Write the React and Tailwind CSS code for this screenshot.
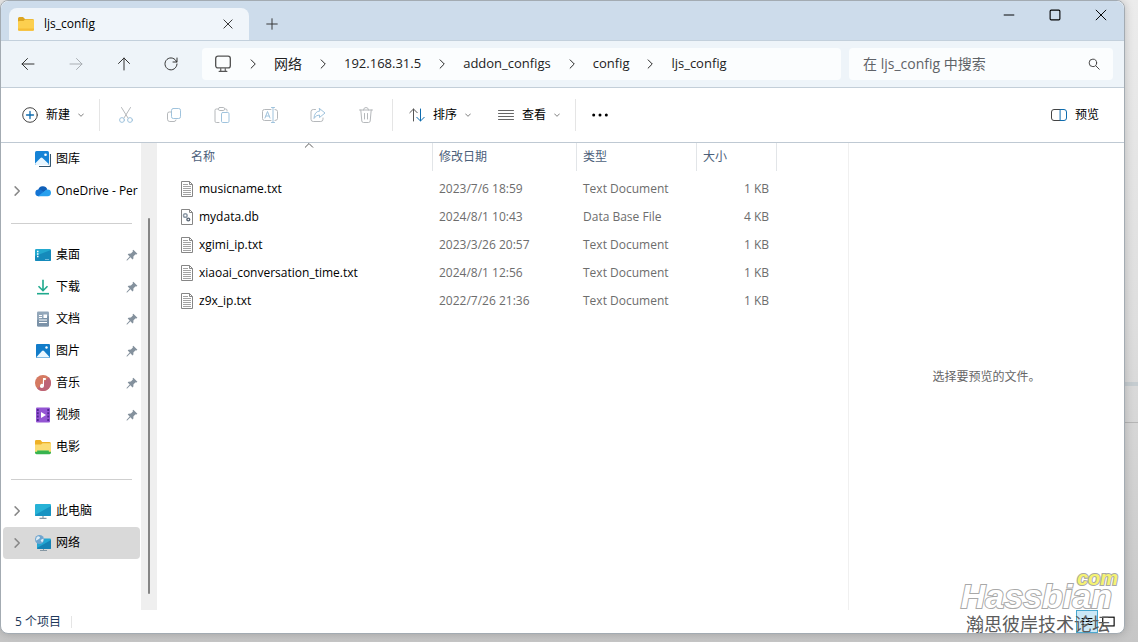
import { useState } from "react";
import clsx from "clsx";

const crumbs = ["网络", "192.168.31.5", "addon_configs", "config", "ljs_config"];

const files = [
  { name: "musicname.txt", date: "2023/7/6 18:59", type: "Text Document", size: "1 KB" },
  { name: "mydata.db", date: "2024/8/1 10:43", type: "Data Base File", size: "4 KB" },
  { name: "xgimi_ip.txt", date: "2023/3/26 20:57", type: "Text Document", size: "1 KB" },
  { name: "xiaoai_conversation_time.txt", date: "2024/8/1 12:56", type: "Text Document", size: "1 KB" },
  { name: "z9x_ip.txt", date: "2022/7/26 21:36", type: "Text Document", size: "1 KB" },
];

const places = [
  { label: "图库", icon: GalleryIcon },
  { label: "OneDrive - Per", icon: CloudIcon, tree: true },
  null,
  { label: "桌面", icon: DesktopIcon, pinned: true },
  { label: "下载", icon: DownloadIcon, pinned: true },
  { label: "文档", icon: DocsIcon, pinned: true },
  { label: "图片", icon: PicturesIcon, pinned: true },
  { label: "音乐", icon: MusicIcon, pinned: true },
  { label: "视频", icon: VideoIcon, pinned: true },
  { label: "电影", icon: MovieFolderIcon },
  null,
  { label: "此电脑", icon: ComputerIcon, tree: true },
  { label: "网络", icon: NetworkIcon, tree: true },
];

const editTools = [
  { label: "剪切", icon: CutIcon },
  { label: "复制", icon: CopyIcon },
  { label: "粘贴", icon: PasteIcon },
  { label: "重命名", icon: RenameIcon },
  { label: "共享", icon: ShareIcon },
  { label: "删除", icon: TrashIcon },
];

/* ---------- icons ---------- */

function Line({ d, className = "w-4 h-4", weight = 1, children }) {
  return (
    <svg
      viewBox="0 0 16 16"
      className={clsx("shrink-0", className)}
      fill="none"
      stroke="currentColor"
      strokeWidth={weight}
      strokeLinecap="round"
      strokeLinejoin="round"
      aria-hidden="true"
    >
      {d && <path d={d} />}
      {children}
    </svg>
  );
}

function Color({ children }) {
  return (
    <svg viewBox="0 0 16 16" className="w-4 h-4 shrink-0" aria-hidden="true">
      {children}
    </svg>
  );
}

function FolderIcon() {
  return (
    <Color>
      <path d="M0 2.500Q0 1 1.500 1H5l2 2h7.500Q16 3 16 4.500V8H0z" fill="#dca522" />
      <path d="M0 6q0-1 1-1h4.500L7 3.500h7.800q1.200 0 1.200 1.200V13.500q0 1.300-1.300 1.300H1.300Q0 14.800 0 13.500z" fill="#fccf4f" />
      <path d="M0 12.500v1q0 1.300 1.300 1.300h13.400q1.300 0 1.300-1.300v-1z" fill="#f5bd37" />
    </Color>
  );
}

function GalleryIcon() {
  return (
    <Color>
      <path d="M4 15.500h10.500q1 0 1-1V3" fill="none" stroke="#35566f" strokeWidth="1.200" />
      <rect width="14" height="14" rx="1.500" fill="#1583d6" />
      <path d="M0 12.500 5.500 7q1-1 2 0l6.300 6q-.5 1-1.500 1H1.500Q.3 14 0 12.500z" fill="#e8f6ff" />
      <circle cx="10.500" cy="3.800" r="1.300" fill="#fff" />
    </Color>
  );
}

function CloudIcon() {
  return (
    <Color>
      <path d="M3.200 7A4.800 4.800 0 0 1 12.300 6.300L9 9.500z" fill="#0f5fb8" />
      <path d="M3.500 13.200A3.300 3.300 0 0 1 3.800 6.600C5 6.600 6 7 6.800 7.600L13 12z" fill="#1474d4" />
      <path d="M3 13.200 10.800 7a3.900 3.900 0 0 1 1.800-.6 3.400 3.400 0 0 1 0 6.800z" fill="#28a0ee" />
    </Color>
  );
}

function DesktopIcon() {
  return (
    <Color>
      <rect y="2" width="16" height="12" rx="1.200" fill="#23a9cf" />
      <path d="M0 9 16 3v10q0 1-1.200 1H1.200Q0 14 0 12.800z" fill="#158abb" />
      <path d="M2 4.500h1.500M2 7h1.500M2 9.500h1.500" stroke="#fff" strokeWidth="1.300" />
      <path d="M10.500 12.500h1M12.500 12.500h1" stroke="#cdefff" strokeWidth="1" />
    </Color>
  );
}

function DownloadIcon() {
  return (
    <Color>
      <path d="M8 .8v10.700M3.500 7.300 8 11.700l4.500-4.400" fill="none" stroke="#1fa98d" strokeWidth="1.600" />
      <path d="M2 14.700h12" stroke="#1fa98d" strokeWidth="1.600" />
    </Color>
  );
}

function DocsIcon() {
  return (
    <Color>
      <rect x="2" y=".5" width="12" height="15" rx="1.200" fill="#93a7ba" />
      <path d="M2 9 14 5v9.300q0 1.200-1.200 1.200H3.200Q2 15.500 2 14.300z" fill="#7b92a8" />
      <path d="M4 4.500h3M4 6.500h3M4 9h8M4 11.500h8" stroke="#fff" strokeWidth="1.100" />
      <rect x="8.500" y="3.500" width="3.500" height="3.500" fill="#fff" />
    </Color>
  );
}

function PicturesIcon() {
  return (
    <Color>
      <rect x="1" y="1" width="14" height="14" rx="1" fill="#127cc9" />
      <path d="M1.500 14 7 8q1-1 2 0l5.500 6q-.2.500-1 .5H2.500q-.8 0-1-.5z" fill="#eaf7ff" />
      <circle cx="11.500" cy="4.500" r="1.200" fill="#fff" />
    </Color>
  );
}

function MusicIcon() {
  return (
    <Color>
      <circle cx="8" cy="8" r="8" fill="#d57a62" />
      <path d="M13.700 2.300A8 8 0 0 1 2.300 13.700z" fill="#bd6478" />
      <path d="M8 3h2.800v2H9v5.800a2 2 0 1 1-1.200-1.700z" fill="#fff" />
    </Color>
  );
}

function VideoIcon() {
  return (
    <Color>
      <rect x="1" y=".5" width="14" height="15" rx="1" fill="#9455d3" />
      <path d="M2.800 2v12M13.200 2v12" stroke="#4f2590" strokeWidth="1.800" strokeDasharray="2 1.300" />
      <path d="M6 5v6l5-3z" fill="#fff" />
    </Color>
  );
}

function MovieFolderIcon() {
  return (
    <Color>
      <path d="M0 2.300Q0 1 1.300 1h4.200l1.700 2H14.500Q16 3 16 4.500V8H0z" fill="#eeb127" />
      <path d="M0 5.500h6l1.500-1.300h8.500V13H0z" fill="#fbdc74" />
      <path d="M2 11.500h12v2H2z" fill="#5fd36a" />
      <path d="M0 12.800h2.500v-1h11v1H16v.7q0 1.800-1.500 1.800h-13Q0 15.300 0 13.500z" fill="#38b44f" />
    </Color>
  );
}

function ComputerIcon() {
  return (
    <Color>
      <rect y="1" width="16" height="12" rx="1" fill="#27b2d6" />
      <path d="M0 12 16 3v9q0 1-1 1H1q-1 0-1-1z" fill="#1793c2" />
      <path d="M8 13v2M4.500 15.300h7" stroke="#8697a3" strokeWidth="1.200" />
    </Color>
  );
}

function NetworkIcon() {
  return (
    <Color>
      <rect x="2" y="3.500" width="14" height="10.500" rx="1" fill="#22a6d2" />
      <path d="M2 13 16 5v8q0 1-1 1H3q-1 0-1-1z" fill="#1582b5" />
      <path d="M8.500 14v1.500M5 15.500h7" stroke="#8697a3" />
      <circle cx="4.500" cy="4.500" r="4.500" fill="#6fa5cf" />
      <path d="M1.500 2.500q1.500-1.800 3-.8T3 4.500 1 4.500zM5.500 5 8.500 3.500q.3 2.500-1.500 4z" fill="#dcebf5" />
    </Color>
  );
}

function PinIcon() {
  return (
    <svg viewBox="0 0 12 12" className="w-3 h-3 shrink-0" aria-hidden="true">
      <path d="M7.300.800 11.400 4.700 10.500 5.400 9.700 5.200 7.500 7.300 7.300 9.700 6.500 10.400 4.400 8.300 1.200 11.400.500 11.500.700 10.700 3.700 7.500 1.700 5.500 2.500 4.700 4.900 4.600 6.900 2.500 6.600 1.600z" fill="#84919d" />
    </svg>
  );
}

function CutIcon() {
  return (
    <Line>
      <path d="M3.500.5 10 11M12.500.5 6 11" stroke="#b5b8bb" />
      <g stroke="#9fc3dd">
        <circle cx="4" cy="13" r="2.400" />
        <circle cx="12" cy="13" r="2.400" />
      </g>
    </Line>
  );
}

function CopyIcon() {
  return (
    <Line>
      <rect x="5.500" y="1.500" width="9" height="10" rx="1.800" stroke="#9fc3dd" />
      <path d="M5 5H3.300Q1.500 5 1.500 6.800v5.400Q1.500 14.500 3.800 14.500H8q1.800 0 2-1.500" stroke="#b5b8bb" />
    </Line>
  );
}

function PasteIcon() {
  return (
    <Line>
      <path d="M4.500 2H2.300Q1 2 1 3.300v10.900q0 1.300 1.300 1.300H5M10.500 2h1.200Q13 2 13 3.300V4" stroke="#b5b8bb" />
      <rect x="4.500" y=".5" width="6" height="3" rx="1.200" stroke="#b5b8bb" />
      <rect x="7.500" y="5.500" width="7.500" height="10" rx="1.200" stroke="#9fc3dd" />
    </Line>
  );
}

function RenameIcon() {
  return (
    <Line>
      <path d="M9 2.500H2.500Q.5 2.500.5 4.500v7q0 2 2 2H9M13 2.500q2.500 0 2.500 2v7q0 2-2.500 2" stroke="#b5b8bb" />
      <path d="M9.500.5h3M11 .5v15M9.500 15.500h3M3 11l2.500-6.500L8 11M4 9h3" stroke="#9fc3dd" />
    </Line>
  );
}

function ShareIcon() {
  return (
    <Line>
      <path d="M5.500 2.500H3.300Q1 2.500 1 4.800v7.400q0 2.300 2.300 2.300h7.400q2.300 0 2.300-2.300V11" stroke="#b5b8bb" />
      <path d="M9.500 1.500 15 6l-5.500 4.500V8Q6 7.800 4 11.500 4.300 4.500 9.500 4z" stroke="#9fc3dd" />
    </Line>
  );
}

function TrashIcon() {
  return (
    <Line className="w-4 h-4 text-[#b5b8bb]" d="M1.500 3h13M5.500 3q0-2.500 2.500-2.500T10.500 3M2.800 3l1 11q.2 1.500 1.700 1.500h5q1.500 0 1.700-1.500l1-11M6.500 6.500v5.500M9.500 6.500v5.500" />
  );
}

function FileIcon({ db }) {
  return (
    <svg viewBox="0 0 14 16" className="w-[14px] h-4 shrink-0" fill="none" aria-hidden="true">
      <path d="M1.500.5h8L12.500 3.500v12h-11z" fill="#fff" stroke="#868686" />
      <path d="M9.500.5v3h3" stroke="#868686" />
      {db ? (
        <>
          <circle cx="5.300" cy="6.500" r="1.800" stroke="#8d99a5" strokeWidth="1.500" />
          <circle cx="8.300" cy="10.500" r="1.400" stroke="#596675" strokeWidth="1.400" />
        </>
      ) : (
        <path d="M3 3.500h5M3 5.500h8M3 7.500h8M3 9.500h8M3 11.500h8M3 13.500h8" stroke="#a3a3a3" />
      )}
    </svg>
  );
}

function Chevron({ className, weight = 1.5 }) {
  return <Line className={className} weight={weight} d="M5.500 2.500 11 8l-5.500 5.500" />;
}

function ChevronDown() {
  return <Line className="w-[6px] h-[6px] text-[#777]" weight={2.5} d="M1.500 5 8 11.500 14.500 5" />;
}

/* ---------- window parts ---------- */

function TitleBar() {
  return (
    <div className="flex h-10 items-end bg-[#cddceb] border-b border-[#c3d0dc] pl-2">
      <div className="flex h-8 w-60 items-center gap-2 rounded-t-lg bg-[#f0f5fa] pl-[9px] pr-[13px]">
        <FolderIcon />
        <span className="flex-1 pl-[2px] text-xs text-black">ljs_config</span>
        <button aria-label="关闭标签页" className="flex w-4 h-4 items-center justify-center text-[#333]">
          <Line className="w-3 h-3" weight={1.3} d="M2.500 2.500l11 11M13.500 2.500l-11 11" />
        </button>
      </div>
      <button aria-label="新建标签页" className="flex h-8 w-[46px] items-center justify-center text-[#333]">
        <Line className="w-3 h-3" weight={1.3} d="M8 1v14M1 8h14" />
      </button>
      <div className="ml-auto flex self-start text-black">
        <button aria-label="最小化" className="flex h-7 w-[46px] items-center justify-center">
          <Line className="w-3 h-3" weight={1.3} d="M1.500 8h13" />
        </button>
        <button aria-label="最大化" className="flex h-7 w-[46px] items-center justify-center">
          <Line className="w-3 h-3" weight={1.5}>
            <rect x="1.500" y="1.500" width="13" height="13" rx="1.500" />
          </Line>
        </button>
        <button aria-label="关闭" className="flex h-7 w-[46px] items-center justify-center">
          <Line className="w-3 h-3" weight={1.3} d="M1.500 1.500l13 13M14.500 1.500l-13 13" />
        </button>
      </div>
    </div>
  );
}

function NavBar() {
  return (
    <div className="flex items-center gap-2 border-b border-[#c3ced8] bg-[#eef4f9] py-[7px] pl-[3px] pr-[11px]">
      <div className="flex text-[#333]">
        <button aria-label="后退" className="flex h-8 w-12 items-center justify-center">
          <Line d="M14 8H2M7.500 2.500 2 8l5.500 5.500" />
        </button>
        <button aria-label="前进" disabled className="flex h-8 w-12 items-center justify-center text-[#a9aeb3]">
          <Line d="M2 8h12M8.500 2.500 14 8l-5.500 5.500" />
        </button>
        <button aria-label="向上" className="flex h-8 w-12 items-center justify-center">
          <Line d="M8 14V2M2.500 7.500 8 2l5.500 5.500" />
        </button>
        <button aria-label="刷新" className="flex h-8 w-[46px] items-center justify-center">
          <Line d="M13.700 6A6 6 0 1 0 14 8M14 2v4h-4" />
        </button>
      </div>

      <nav aria-label="路径" className="flex h-8 min-w-0 flex-1 items-center rounded bg-[#fbfdfe] pl-3 text-[13px] text-[#222]">
        <Line className="w-[18px] h-[18px] text-[#555]">
          <rect x="1.500" y="1" width="13" height="10.500" rx="2" strokeWidth="1.200" />
          <path d="M6 12v2.500M10 12v2.500M4.500 14.500h7" />
        </Line>
        {crumbs.map((crumb) => (
          <div key={crumb} className="flex items-center">
            <Chevron className="mx-[15px] w-3 h-3" weight={1.3} />
            <a href="#" className={crumb === "网络" ? "text-sm" : ""}>
              {crumb}
            </a>
          </div>
        ))}
      </nav>

      <label className="flex h-8 w-[264px] items-center rounded bg-[#fbfdfe] pl-[14px] pr-[13px]">
        <input
          type="text"
          aria-label="搜索"
          placeholder="在 ljs_config 中搜索"
          className="min-w-0 flex-1 bg-transparent text-sm outline-none placeholder:text-[#5f6368]"
        />
        <Line className="w-3 h-3 text-[#444]" weight={1.3}>
          <circle cx="6.500" cy="6.500" r="5" />
          <path d="M10.500 10.500 15 15" />
        </Line>
      </label>
    </div>
  );
}

function Toolbar() {
  return (
    <div className="flex h-[55px] items-center border-b border-[#bfc9d3] pl-[21px] pr-[25px] text-xs text-black">
      <button className="flex items-center gap-2">
        <Line className="w-4 h-4 text-[#444]">
          <circle cx="8" cy="8" r="7.300" />
          <path d="M8 4.500v7M4.500 8h7" stroke="#0f6cae" strokeWidth="1.300" />
        </Line>
        <span>新建</span>
        <ChevronDown />
      </button>
      <span className="mr-[2px] ml-[15px] h-8 w-px bg-[#e5e5e5]" />
      {editTools.map(({ label, icon: Icon }) => (
        <button key={label} aria-label={label} disabled className="flex h-8 w-12 items-center justify-center">
          <Icon />
        </button>
      ))}
      <span className="mx-[2px] h-8 w-px bg-[#e5e5e5]" />
      <button className="ml-[14px] flex items-center gap-2">
        <Line className="w-4 h-4 text-[#555]">
          <path d="M4.500 14V2M.8 5.700 4.500 2l3.700 3.700" />
          <path d="M11.500 2v12M7.800 10.300l3.700 3.700 3.700-3.700" stroke="#0f6cae" />
        </Line>
        <span>排序</span>
        <ChevronDown />
      </button>
      <button className="ml-[27px] flex items-center gap-2">
        <Line className="w-4 h-4 text-[#666]" d="M.5 3.500h15M.5 6.500h15M.5 9.500h15M.5 12.500h15" />
        <span>查看</span>
        <ChevronDown />
      </button>
      <span className="ml-[15px] h-8 w-px bg-[#e5e5e5]" />
      <button aria-label="更多" className="flex h-8 w-12 items-center justify-center">
        <svg viewBox="0 0 16 16" className="w-4 h-4" aria-hidden="true">
          <circle cx="1.700" cy="8" r="1.500" />
          <circle cx="8" cy="8" r="1.500" />
          <circle cx="14.300" cy="8" r="1.500" />
        </svg>
      </button>
      <button className="ml-auto flex items-center gap-2">
        <Line className="w-4 h-4 text-[#444]">
          <path d="M9.500 2.500H3Q.5 2.500.5 5v6q0 2.500 2.500 2.500h6.500" />
          <path d="M9.500 2.500H13q2.500 0 2.500 2.500v6q0 2.500-2.500 2.500H9.500z" stroke="#0f6cae" />
        </Line>
        <span>预览</span>
      </button>
    </div>
  );
}

function Sidebar() {
  const [current, setCurrent] = useState("网络");

  return (
    <aside className="flex w-[156px] shrink-0">
      <ul className="min-w-0 flex-1 pl-[2px] pr-px">
        {places.map((place, i) => {
          if (!place) {
            return (
              <li key={i} className="flex h-8 items-center px-2">
                <hr className="w-full border-[#cfcfcf]" />
              </li>
            );
          }
          const Icon = place.icon;
          return (
            <li key={place.label}>
              <button
                onClick={() => setCurrent(place.label)}
                className={clsx(
                  "flex h-8 w-full items-center rounded-sm pl-2 text-left text-xs text-black",
                  current === place.label && "bg-[#d9d9d9]"
                )}
              >
                <span className="flex w-6 shrink-0 text-[#888]">
                  {place.tree && <Chevron className="w-3 h-3" weight={2} />}
                </span>
                <Icon />
                <span className="ml-[5px] flex-1 whitespace-nowrap">{place.label}</span>
                {place.pinned && (
                  <span className="pr-[2px]">
                    <PinIcon />
                  </span>
                )}
              </button>
            </li>
          );
        })}
      </ul>
      <div className="flex w-4 justify-center bg-[#efefef] pt-[75px] pb-4">
        <div className="w-[2px] rounded bg-[#858585]" />
      </div>
    </aside>
  );
}

function FileList() {
  return (
    <main className="min-w-0 flex-1 pl-[2px]">
      <table className="w-[618px] table-fixed text-left text-xs text-[#6d6d6d]">
        <thead className="text-[#4c607a]">
          <tr>
            <th className="w-[274px] p-0 pb-1 font-normal">
              <div className="relative flex h-7 items-center border-r border-[#e2e5e8] pl-8">
                名称
                <Line className="absolute -top-1 left-36 w-3 h-3 text-[#555]" weight={1.3} d="M3 11l5-5 5 5" />
              </div>
            </th>
            <th className="w-36 p-0 pb-1 font-normal">
              <div className="flex h-7 items-center border-r border-[#e2e5e8] pl-[6px]">修改日期</div>
            </th>
            <th className="w-[120px] p-0 pb-1 font-normal">
              <div className="flex h-7 items-center border-r border-[#e2e5e8] pl-[6px]">类型</div>
            </th>
            <th className="w-20 p-0 pb-1 font-normal">
              <div className="flex h-7 items-center border-r border-[#e2e5e8] pl-[6px]">大小</div>
            </th>
          </tr>
        </thead>
        <tbody>
          {files.map((file) => (
            <tr key={file.name} className="h-7">
              <td className="py-0 pl-[21px] text-black">
                <div className="flex items-center gap-[5px]">
                  <FileIcon db={file.name.endsWith(".db")} />
                  {file.name}
                </div>
              </td>
              <td className="py-0 pl-[6px]">{file.date}</td>
              <td className="py-0 pl-[6px]">{file.type}</td>
              <td className="py-0 pr-2 text-right">{file.size}</td>
            </tr>
          ))}
        </tbody>
      </table>
    </main>
  );
}

function StatusBar() {
  return (
    <footer className="flex h-[23px] items-center pl-[14px] pr-[9px] text-xs text-[#1e395b]">
      <span>5 个项目</span>
      <span className="ml-[10px] h-3 w-px bg-[#e5e5e5]" />
      <div className="ml-auto flex items-center gap-[3px]">
        <button aria-label="详细信息" className="flex h-[23px] w-[22px] items-center justify-center border border-[#4aa8cf] bg-[#cce8f6] text-black">
          <Line d="M3 4.500h2M7 4.500h6M3 7.500h2M7 7.500h6M3 10.500h2M7 10.500h6" />
        </button>
        <button aria-label="大图标" className="flex w-[14px] justify-center text-black">
          <Line className="w-[14px] h-[14px]" weight={1.3}>
            <rect x="2" y="2.500" width="13" height="10" strokeLinejoin="miter" />
          </Line>
        </button>
      </div>
    </footer>
  );
}

function Watermark() {
  return (
    <div className="pointer-events-none absolute right-3 -bottom-px text-right [paint-order:stroke]">
      <div className="relative font-['Liberation_Sans',sans-serif] text-[34px] leading-9 font-bold text-white italic [-webkit-text-stroke:2px_#a8a8a8]">
        Hassbian
        <span className="absolute -top-[18px] -right-[6px] text-xl leading-9 text-[#f5f272]">com</span>
      </div>
      <div className="pr-[2px] text-lg leading-5 text-[#5c5c5c]">瀚思彼岸技术论坛</div>
    </div>
  );
}

export default function App() {
  return (
    <div className="relative flex h-screen bg-linear-to-b from-[#ececec] via-[#dedede] to-[#c6c6c6] pr-[13px] pb-2 font-['Open_Sans','Noto_Sans_CJK_SC',sans-serif]">
      {/* edges of the windows behind this one */}
      <div className="absolute top-[382px] right-0 h-1 w-8 bg-[#c5ccd0]" />
      <div className="absolute top-[422px] right-0 h-px w-8 bg-[#b5b5b5]" />

      <div className="relative flex min-w-0 flex-1 flex-col rounded-lg border border-[#a3abb2] bg-white shadow-[0_0_10px_rgba(0,0,0,0.2)]">
        <div className="overflow-hidden rounded-t-lg">
          <TitleBar />
          <NavBar />
        </div>
        <Toolbar />
        <div className="flex min-h-0 flex-1">
          <Sidebar />
          <FileList />
          <section className="flex w-[276px] items-center justify-center border-l border-[#f0f0f0] text-xs text-[#666]">
            选择要预览的文件。
          </section>
        </div>
        <StatusBar />
        <Watermark />
      </div>
    </div>
  );
}
